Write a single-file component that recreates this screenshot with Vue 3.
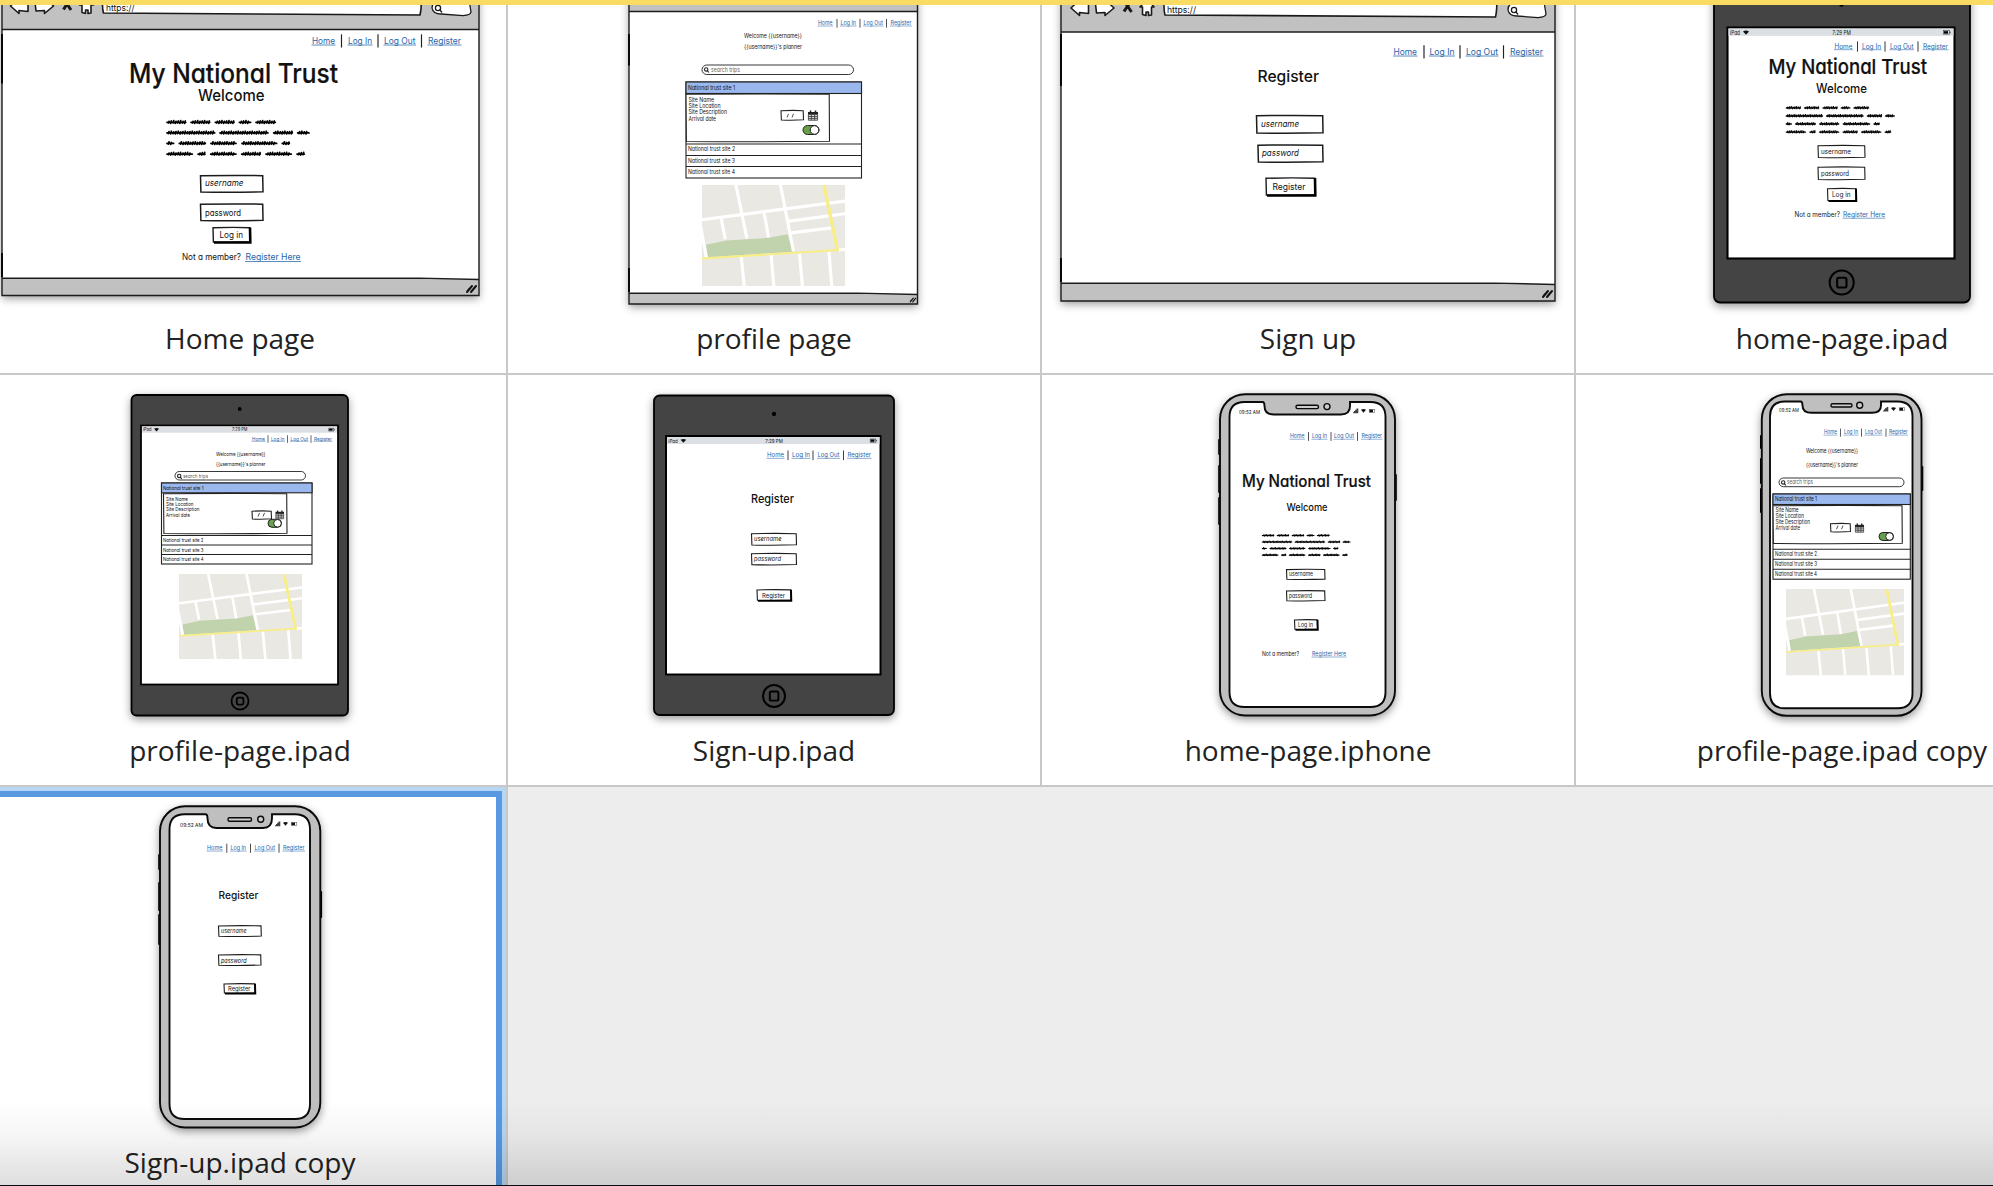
<script setup>
const BLUE = 'link'

/* Words of the scribbled paragraph, per line: [start, end] */
const scribbleWords = [
  [[0, 62], [72, 134], [145, 207], [217, 257], [267, 331]],
  [[0, 149], [159, 309], [320, 382], [392, 432]],
  [[0, 26], [37, 121], [132, 213], [225, 335], [346, 373]],
  [[0, 82], [93, 120], [131, 213], [224, 286], [297, 379], [390, 418]],
]
const scribblePath = scribbleWords
  .map((line, row) =>
    line
      .map(([a, b], w) => {
        const y = row * 31.7
        let d = `M${a + 3} ${y + 1}H${b - 3}`
        let i = 0
        for (let x = a + 9; x < b - 3; x += 7, i++) {
          const up = ((i * 7 + w * 3 + row) % 3) + 2
          d += `M${x} ${y - up}L${x - 2} ${y + 3 + (i % 2)}`
        }
        return d
      })
      .join(''),
  )
  .join('')

const roads =
  'M102 0L135 160M236 0L275 198M0 104L430 48M58 101L70 162M187 84L200 157M262 108L430 86M268 143L390 128M-4 125L13 216M410 194L430 192M118 215L127 302M208 210L216 302M293 205L302 302M382 200L390 302'

/* xs: edges of Home | sep | Log In | sep | Log Out | sep | Register */
function nav(xs, y, size) {
  const names = ['Home', 'Log In', 'Log Out', 'Register']
  const texts = names.map((n, i) => [xs[i * 3], y, xs[i * 3 + 1], size, n, BLUE])
  const seps = [2, 5, 8].map((i) => [xs[i], y - size * 1.02, y + size * 0.45, size * 0.13])
  return { texts, seps }
}

const screens = [
  {
    name: 'Home page', ox: -26, oy: -37, frame: 'browser',
    b: { x: 2, x2: 479, top: 29.5, foot: 279, y2: 295.5, url: [102.5, 421, 15], pill: [432, 471], k: 1, ix: 0, iy: 0, t: [106, 134.5, 11.3] },
    nav: nav([312, 335, 341.5, 348, 372, 378, 384, 415.5, 421.5, 428, 461], 43.5, 9),
    texts: [
      [129, 82.5, 338, 27, 'My National Trust', 'bold'],
      [198, 101, 264.5, 16.5, 'Welcome', 'semi'],
      [205, 186, 243.5, 9, 'username', 'ital'],
      [205, 215.5, 241, 9, 'password', ''],
      [219.5, 238, 243, 9, 'Log in', ''],
      [182, 260, 241, 9, 'Not a member?', ''],
      [245.5, 260, 300.5, 9, 'Register Here', BLUE],
    ],
    scribble: [166, 122, 0.3333],
    boxes: [[200.5, 175.5, 263, 192], [200.5, 204, 263, 220.5]],
    buttons: [[213, 227.5, 250, 242]],
  },
  {
    name: 'profile page', ox: 508, oy: -37, frame: 'browser',
    b: { x: 629, x2: 917.5, top: 11.5, foot: 294, y2: 304, k: 0.6 },
    nav: nav([818, 832.5, 837, 840.5, 856, 860, 863.5, 883, 886.5, 890.5, 911.5], 25, 6),
    texts: [
      [744, 37.5, 802, 6, 'Welcome {{username}}', ''],
      [744, 48.5, 802, 6, "{{username}}'s planner", ''],
    ],
    plan: {
      pill: [702, 65, 853.5, 74.5], search: [711, 71.8, 740], size: 6,
      acc: [686, 82, 861.5, 178], head: 93.5, inner: [686, 94, 829.5, 141.5], rows: [144, 155.5, 166.5],
      rowText: [688, 735, 89.5, 151.3, 163, 174], info: [688.5, [714, 720.5, 727, 716], [102, 107.7, 114.3, 120.7]],
      date: [781, 110.5, 803.5, 120], cal: [808, 110.5, 10], toggle: [803, 125.5, 16, 9], map: [702, 185, 143, 101],
    },
  },
  {
    name: 'Sign up', ox: 1042, oy: -37, frame: 'browser',
    b: { x: 1061, x2: 1555, top: 32, foot: 284, y2: 301, url: [1164, 1496.5, 17], pill: [1508, 1546], k: 1, ix: 1060.5, iy: 2, t: [1167, 1196, 13.3] },
    nav: nav([1393.5, 1417, 1424, 1429.5, 1454.5, 1460, 1466, 1498, 1503.5, 1510, 1543], 54.5, 9),
    texts: [
      [1257.5, 82, 1319, 16, 'Register', 'semi'],
      [1261, 126.5, 1299, 9, 'username', 'ital'],
      [1262, 156, 1299, 9, 'password', 'ital'],
      [1272.5, 190, 1305.5, 9, 'Register', ''],
    ],
    boxes: [[1256.5, 115.5, 1323, 133], [1258, 145, 1323, 162]],
    buttons: [[1266, 178, 1315, 195]],
  },
  {
    name: 'home-page.ipad', ox: 1576, oy: -37, frame: 'tablet',
    t: { x: 1714, y: -14, x2: 1970, y2: 302.5, s: [1727.5, 27.5, 1954.5, 258.5], cam: [1841.5, 4.5], home: [1841.7, 282.5, 12], k: 1 },
    nav: nav([1834.5, 1852.5, 1857.5, 1862, 1881, 1885, 1890, 1913.5, 1918, 1923, 1948], 48.5, 7),
    texts: [
      [1768.5, 73.5, 1927, 20.5, 'My National Trust', 'bold'],
      [1816, 93, 1867, 12.7, 'Welcome', 'semi'],
      [1821, 154, 1851, 7, 'username', ''],
      [1821, 175.5, 1849, 7, 'password', ''],
      [1832, 197, 1850.5, 7, 'Log in', ''],
      [1794.5, 217, 1840, 7, 'Not a member?', ''],
      [1843, 217, 1885, 7, 'Register Here', BLUE],
    ],
    scribble: [1785.5, 107.7, 0.2535],
    boxes: [[1818, 145.5, 1865, 157.5], [1818, 167, 1865, 179.5]],
    buttons: [[1827.5, 188.5, 1856, 200.5]],
  },
  {
    name: 'profile-page.ipad', ox: -26, oy: 375, frame: 'tablet',
    t: { x: 131.5, y: 395, x2: 348, y2: 715.5, s: [141, 425.5, 338, 684.5], cam: [239.7, 409], home: [240, 701, 8.5], k: 0.84 },
    nav: nav([252, 265, 268, 271, 284.5, 287.5, 290.5, 308, 311, 314, 332], 440.5, 5.2),
    texts: [
      [216, 455.5, 265.5, 5.2, 'Welcome {{username}}', ''],
      [216, 465.7, 265.5, 5.2, "{{username}}'s planner", ''],
    ],
    plan: {
      pill: [175, 471.5, 305.5, 480], search: [183, 477.5, 208], size: 5.2,
      acc: [161.5, 483, 312, 564], head: 492.8, inner: [163.5, 493.5, 287, 533.5], rows: [535.5, 545, 554.5],
      rowText: [163, 203.5, 489.5, 542.3, 551.5, 561.3], info: [166, [188, 193.5, 199.5, 190], [500.5, 506, 511, 516.7]],
      date: [252, 511, 271.5, 519], cal: [275.5, 510.5, 8.5], toggle: [268, 519.3, 13.5, 8], map: [179, 574, 123, 85],
    },
  },
  {
    name: 'Sign-up.ipad', ox: 508, oy: 375, frame: 'tablet',
    t: { x: 654, y: 395.5, x2: 894, y2: 715, s: [666, 436, 880.5, 674.5], cam: [774, 414], home: [774, 696, 11], k: 0.94 },
    nav: nav([767, 784, 788, 792, 810, 813, 817.5, 839.5, 843.5, 847.5, 871], 457.2, 6.6),
    texts: [
      [751, 503, 794, 12, 'Register', 'semi'],
      [754, 541.3, 781.5, 6.6, 'username', 'ital'],
      [754, 561.3, 781, 6.6, 'password', 'ital'],
      [762, 597.5, 785, 6.6, 'Register', ''],
    ],
    boxes: [[751.5, 533.5, 796.5, 545], [751.5, 553.5, 796.5, 564.7]],
    buttons: [[757, 589.7, 791, 600.3]],
  },
  {
    name: 'home-page.iphone', ox: 1042, oy: 375, frame: 'phone',
    p: { x: 1220, y: 394.2, x2: 1395, y2: 715.5, s: [1229.5, 402, 1385.5, 707], n: [1264.5, 1350, 414.5], sp: [1296, 1318.5, 405.2, 408.6], c: [1327, 406.6], time: [1239, 1260, 414], sig: [1353, 412.5], l: [[440, 454], [466, 492], [498, 524]], r: [475, 500] },
    nav: nav([1290, 1304.5, 1308.5, 1312, 1327, 1331, 1334, 1354, 1357.5, 1361.5, 1382], 438.2, 6),
    texts: [
      [1242, 486.5, 1371, 16.6, 'My National Trust', 'bold'],
      [1286.5, 511, 1327.5, 10.5, 'Welcome', 'semi'],
      [1289, 576.2, 1313, 6, 'username', ''],
      [1289, 597.8, 1312, 6, 'password', ''],
      [1298, 626.7, 1313, 6, 'Log in', ''],
      [1262, 656, 1299, 6, 'Not a member?', ''],
      [1312, 656, 1346, 6, 'Register Here', BLUE],
    ],
    scribble: [1261.7, 535.3, 0.206],
    boxes: [[1286.5, 569.3, 1325, 579.3], [1286.5, 590.7, 1325, 600.7]],
    buttons: [[1294.5, 619.7, 1317.5, 629.3]],
  },
  {
    name: 'profile-page.ipad copy', ox: 1576, oy: 375, frame: 'phone',
    p: { x: 1761.8, y: 394.2, x2: 1921.5, y2: 715.8, s: [1770, 401.5, 1912.5, 708.3], n: [1802.5, 1881, 412.8], sp: [1831, 1852, 403.7, 407], c: [1859.7, 405.2], time: [1779, 1799, 411.5], sig: [1883, 410.8], l: [[436, 448], [459, 483], [489, 512]], r: [467, 490] },
    nav: nav([1824, 1837, 1840.5, 1844, 1858, 1861.5, 1865, 1882, 1886, 1889, 1907.5], 434.2, 5.5),
    texts: [
      [1806, 453, 1858, 5.5, 'Welcome {{username}}', ''],
      [1806, 467, 1858, 5.5, "{{username}}'s planner", ''],
    ],
    plan: {
      pill: [1779, 478, 1904, 486.7], search: [1787, 484.3, 1813], size: 5.5,
      acc: [1773, 494, 1910.3, 579.2], head: 504.5, inner: [1773, 505.5, 1902.3, 543.5], rows: [549.3, 559.3, 569.3],
      rowText: [1775, 1817, 501, 556.3, 566.3, 576], info: [1775.5, [1798.5, 1804, 1810, 1800], [511.7, 517.5, 523.8, 529.8]],
      date: [1830.5, 523.5, 1850.5, 531.7], cal: [1855, 523.5, 9], toggle: [1879, 532.5, 14.5, 8], map: [1786, 589, 118, 86.5],
    },
  },
  {
    name: 'Sign-up.ipad copy', ox: -26, oy: 787, frame: 'phone', selected: true,
    p: { x: 160, y: 806.2, x2: 320.3, y2: 1127.5, s: [169.5, 814.3, 310, 1119], n: [207.5, 272, 828], sp: [228, 251.5, 817.7, 821.2], c: [260.7, 819.3], time: [180, 203, 826.5], sig: [275, 825.5], l: [[855, 869], [883, 910], [915, 944]], r: [892, 917] },
    nav: nav([207, 222.5, 226.8, 230.5, 246, 250.5, 254.5, 275, 279, 283, 304.5], 850, 6.2),
    texts: [
      [218.5, 899.3, 258.5, 11, 'Register', 'semi'],
      [221, 933, 246.5, 6.2, 'username', 'ital'],
      [221, 962.5, 246.5, 6.2, 'password', 'ital'],
      [228, 990.7, 250.5, 6.2, 'Register', ''],
    ],
    boxes: [[218.5, 925.7, 261.3, 936.2], [218.5, 954.7, 261, 965.2]],
    buttons: [[224, 983.7, 255, 993]],
  },
]

const siteInfo = ['Site Name', 'Site Location', 'Site Description', 'Arrival date']

function notchPath({ s: [x, y, x2, y2], n: [a, b, ny] }) {
  const r = 15
  return `M${x + r} ${y}H${a - 2}Q${a} ${y} ${a} ${y + 4}Q${a} ${ny} ${a + 9} ${ny}H${b - 9}Q${b} ${ny} ${b} ${y + 4}V${y}H${x2 - r}Q${x2} ${y} ${x2} ${y + r}V${y2 - r}Q${x2} ${y2} ${x2 - r} ${y2}H${x + r}Q${x} ${y2} ${x} ${y2 - r}V${y + r}Q${x} ${y} ${x + r} ${y}Z`
}

/* Slightly uneven hand-drawn rectangle */
function sketchRect([x, y, x2, y2]) {
  return `M${x} ${y + 0.3}Q${(x + x2) / 2} ${y - 0.4} ${x2 - 0.3} ${y + 0.2}L${x2} ${y2 - 0.2}Q${(x + x2) / 2} ${y2 + 0.6} ${x + 0.4} ${y2}Z`
}
</script>

<template>
  <main class="page">
    <div class="grid">
      <figure v-for="s in screens" :key="s.name" class="cell" :class="{ selected: s.selected }">
        <svg class="preview" width="532" height="355" :viewBox="`${s.ox} ${s.oy} 532 355`">
          <!-- browser window -->
          <g v-if="s.frame === 'browser'">
            <rect class="shadowed" :x="s.b.x" :y="-80" :width="s.b.x2 - s.b.x" :height="s.b.y2 + 80" fill="#c1c1c1" />
            <rect :x="s.b.x" :y="s.b.top" :width="s.b.x2 - s.b.x" :height="s.b.foot - s.b.top" fill="#fff" />
            <g fill="none" stroke="#1c1c1c" stroke-width="1.4">
              <path :d="`M${s.b.x} -80V${s.b.y2}H${s.b.x2}V-80`" />
              <path :d="`M${s.b.x} ${s.b.top}H${s.b.x2}`" />
              <path :d="`M${s.b.x} ${s.b.foot - 0.7}L${s.b.x2 - 60} ${s.b.foot - 0.9}L${s.b.x2} ${s.b.foot + 0.5}`" />
            </g>
            <path :d="`M${s.b.x} 34V${s.b.top + 54}M${s.b.x} ${s.b.foot - 26}V${s.b.foot - 2}`" stroke="#000" stroke-width="1.800" />
            <g :transform="`translate(${s.b.x2 - 13 * s.b.k} ${s.b.foot + 5 * s.b.k}) scale(${s.b.k})`" stroke="#111" stroke-width="2" stroke-linecap="round">
              <path d="M1 8L6 2M5 8L10 2M3 5L1.500 7" />
            </g>
            <template v-if="s.b.url">
              <g :transform="`translate(${s.b.ix} ${s.b.iy})`" fill="#fff" stroke="#1a1a1a" stroke-width="1.6" stroke-linejoin="round">
                <path d="M10.500 6L19 -2V2H28V11.500L19 10.500V13.500Z" />
                <path d="M35 2H45V-2L53.500 6L44.500 13.500V10.500L36 11Z" />
                <path d="M63 -2L71 10M71 -2L63.500 9.500" fill="none" stroke-width="3" />
                <path d="M79.500 5L87 -3L93.500 5H91V13L88 13.500V10H85.500V13.500L82 12.500V5Z" />
              </g>
              <path
                :d="`M${s.b.url[0] + 1} -8Q${s.b.url[0] - 1} ${s.b.url[2] - 8} ${s.b.url[0] + 1} ${s.b.url[2] - 2}L${s.b.url[1] - 1} ${s.b.url[2]}Q${s.b.url[1] + 1} ${s.b.url[2] - 8} ${s.b.url[1]} -8Z`"
                fill="#fff" stroke="#1a1a1a" stroke-width="1.6"
              />
              <text class="sketch" :x="s.b.t[0]" :y="s.b.t[2]" font-size="9" :textLength="s.b.t[1] - s.b.t[0]" lengthAdjust="spacingAndGlyphs">https://</text>
              <path
                :d="`M${s.b.pill[0] + 8} ${s.b.url[2] - 15}Q${s.b.pill[0]} ${s.b.url[2] - 14} ${s.b.pill[0]} ${s.b.url[2] - 7}Q${s.b.pill[0] + 1} ${s.b.url[2] - 1} ${s.b.pill[0] + 9} ${s.b.url[2] - 1}L${s.b.pill[1] - 8} ${s.b.url[2] + 0.6}Q${s.b.pill[1]} ${s.b.url[2]} ${s.b.pill[1]} ${s.b.url[2] - 3}L${s.b.pill[1] - 2} ${s.b.url[2] - 15}Z`"
                fill="#fff" stroke="#1a1a1a" stroke-width="1.3"
              />
              <g fill="none" stroke="#1a1a1a" stroke-width="1.3">
                <circle :cx="s.b.pill[0] + 6" :cy="s.b.url[2] - 7" r="2.600" />
                <path :d="`M${s.b.pill[0] + 7.5} ${s.b.url[2] - 5.5}l2.500 3`" />
              </g>
            </template>
          </g>

          <!-- tablet -->
          <g v-else-if="s.frame === 'tablet'">
            <rect class="shadowed" :x="s.t.x" :y="s.t.y" :width="s.t.x2 - s.t.x" :height="s.t.y2 - s.t.y" :rx="6 * s.t.k" fill="#444" stroke="#000" stroke-width="1.8" />
            <rect :x="s.t.s[0]" :y="s.t.s[1]" :width="s.t.s[2] - s.t.s[0]" :height="s.t.s[3] - s.t.s[1]" fill="#fff" stroke="#000" :stroke-width="2.1 * s.t.k" />
            <rect :x="s.t.s[0] + 1" :y="s.t.s[1] + 1" :width="s.t.s[2] - s.t.s[0] - 2" :height="7.4 * s.t.k" fill="#dce0e4" />
            <circle :cx="s.t.cam[0]" :cy="s.t.cam[1]" :r="2.3 * s.t.k" fill="#000" />
            <g fill="none" stroke="#000" :stroke-width="2.1 * s.t.k">
              <circle :cx="s.t.home[0]" :cy="s.t.home[1]" :r="s.t.home[2]" />
              <rect :x="s.t.home[0] - s.t.home[2] * 0.38" :y="s.t.home[1] - s.t.home[2] * 0.4" :width="s.t.home[2] * 0.78" :height="s.t.home[2] * 0.82" :rx="s.t.home[2] * 0.15" />
            </g>
            <text class="sketch" :x="s.t.s[0] + 2.5 * s.t.k" :y="s.t.s[1] + 7 * s.t.k" :font-size="5.6 * s.t.k" :textLength="10 * s.t.k" lengthAdjust="spacingAndGlyphs">iPad</text>
            <text class="sketch" :x="s.t.cam[0] - 9.3 * s.t.k" :y="s.t.s[1] + 7 * s.t.k" :font-size="5.6 * s.t.k" :textLength="18.6 * s.t.k" lengthAdjust="spacingAndGlyphs">7:29 PM</text>
            <g :transform="`translate(${s.t.s[0] + 15.5 * s.t.k} ${s.t.s[1] + 3 * s.t.k}) scale(${s.t.k})`">
              <path d="M0 1Q3 -0.800 6 1L3 4.200Z" fill="#111" />
            </g>
            <g :transform="`translate(${s.t.s[2] - 11 * s.t.k} ${s.t.s[1] + 3.2 * s.t.k}) scale(${s.t.k})`">
              <rect x="0" y="0" width="6" height="3.400" fill="none" stroke="#333" stroke-width=".6" />
              <rect x=".5" y=".5" width="4" height="2.400" fill="#000" />
              <rect x="6.300" y="1" width=".8" height="1.500" fill="#333" />
            </g>
          </g>

          <!-- phone -->
          <g v-else>
            <g stroke="#000" stroke-width="2" stroke-linecap="round">
              <path v-for="(k, i) in s.p.l" :key="i" :d="`M${s.p.x - 0.8} ${k[0]}V${k[1]}`" />
              <path :d="`M${s.p.x2 + 0.8} ${s.p.r[0]}V${s.p.r[1]}`" />
            </g>
            <rect class="shadowed" :x="s.p.x" :y="s.p.y" :width="s.p.x2 - s.p.x" :height="s.p.y2 - s.p.y" rx="25" fill="#bfbfbf" stroke="#0a0a0a" stroke-width="1.900" />
            <path :d="notchPath(s.p)" fill="#fff" stroke="#0a0a0a" stroke-width="1.900" />
            <rect :x="s.p.sp[0]" :y="s.p.sp[2]" :width="s.p.sp[1] - s.p.sp[0]" :height="s.p.sp[3] - s.p.sp[2]" rx="1.500" fill="#ccc" stroke="#0a0a0a" stroke-width="1.400" />
            <circle :cx="s.p.c[0]" :cy="s.p.c[1]" r="3" fill="#ccc" stroke="#0a0a0a" stroke-width="1.400" />
            <text class="sketch" :x="s.p.time[0]" :y="s.p.time[2]" font-size="5.200" :textLength="s.p.time[1] - s.p.time[0]" lengthAdjust="spacingAndGlyphs">09:52 AM</text>
            <g :transform="`translate(${s.p.sig[0]} ${s.p.sig[1]})`" fill="#111">
              <path d="M0 .8V-.3H1V-1.500H2.200V-2.700H3.500V-3.900H5.300V.8Z" opacity=".8" />
              <path d="M8 -2.700Q10.500 -4.500 13 -2.700L10.500 .3Z" />
              <rect x="16.200" y="-3" width="5.600" height="2.800" fill="none" stroke="#444" stroke-width=".5" />
              <rect x="16.500" y="-2.900" width="3.500" height="2.600" />
            </g>
          </g>

          <!-- navigation separators -->
          <path v-for="(p, i) in s.nav.seps" :key="'s' + i" :d="`M${p[0]} ${p[1]}V${p[2]}`" stroke="#222" :stroke-width="p[3]" />

          <!-- form controls -->
          <path v-if="s.scribble" :d="scribblePath" :transform="`translate(${s.scribble[0]} ${s.scribble[1]}) scale(${s.scribble[2]})`" class="scribble" />
          <path v-for="(b, i) in s.boxes" :key="'b' + i" :d="sketchRect(b)" fill="#fff" stroke="#1c1c1c" :stroke-width="s.frame === 'browser' ? 1.5 : 1.1" />
          <g v-for="(b, i) in s.buttons" :key="'u' + i">
            <path :d="sketchRect(b)" fill="#fff" stroke="#1c1c1c" :stroke-width="s.frame === 'browser' ? 1.4 : 1.1" />
            <path :d="`M${b[2]} ${b[1]}L${b[2] + 0.3} ${b[3] + 0.5}H${b[0] + 1}`" fill="none" stroke="#000" :stroke-width="s.frame === 'browser' ? 2.6 : 1.9" />
          </g>

          <!-- planner -->
          <g v-if="s.plan">
            <g fill="#fff" stroke="#222" stroke-width="1.100">
              <rect :x="s.plan.pill[0]" :y="s.plan.pill[1]" :width="s.plan.pill[2] - s.plan.pill[0]" :height="s.plan.pill[3] - s.plan.pill[1]" :rx="(s.plan.pill[3] - s.plan.pill[1]) / 2" stroke-width=".9" />
              <circle :cx="s.plan.pill[0] + 4.2" :cy="s.plan.pill[1] + 4.4" r="1.700" />
              <path :d="`M${s.plan.pill[0] + 5.3} ${s.plan.pill[1] + 5.6}l1.600 1.900`" />
              <rect :x="s.plan.acc[0]" :y="s.plan.acc[1]" :width="s.plan.acc[2] - s.plan.acc[0]" :height="s.plan.acc[3] - s.plan.acc[1]" />
              <rect :x="s.plan.acc[0]" :y="s.plan.acc[1]" :width="s.plan.acc[2] - s.plan.acc[0]" :height="s.plan.head - s.plan.acc[1]" fill="#9ab8ee" />
              <path :d="sketchRect(s.plan.inner)" />
              <path v-for="y in s.plan.rows" :key="y" :d="`M${s.plan.acc[0]} ${y}H${s.plan.acc[2]}`" />
              <path :d="sketchRect(s.plan.date)" />
              <path
                :d="`M${s.plan.date[0] + 6} ${s.plan.date[3] - 2.5}l1.500 -3.600m3.500 3.600l1.500 -3.600`" stroke-width=".8" fill="none"
              />
            </g>
            <text class="sketch" fill-opacity=".75" :x="s.plan.search[0]" :y="s.plan.search[1]" :font-size="s.plan.size" :textLength="s.plan.search[2] - s.plan.search[0]" lengthAdjust="spacingAndGlyphs">search trips</text>
            <text
              v-for="n in 4" :key="'r' + n" class="sketch" :x="s.plan.rowText[0]" :y="s.plan.rowText[n + 1]" :font-size="s.plan.size"
              :textLength="s.plan.rowText[1] - s.plan.rowText[0]" lengthAdjust="spacingAndGlyphs"
            >National trust site {{ n }}</text>
            <text
              v-for="(t, i) in siteInfo" :key="t" class="sketch" :x="s.plan.info[0]" :y="s.plan.info[2][i]" :font-size="s.plan.size"
              :textLength="s.plan.info[1][i] - s.plan.info[0]" lengthAdjust="spacingAndGlyphs"
            >{{ t }}</text>
            <g :transform="`translate(${s.plan.cal[0]} ${s.plan.cal[1]}) scale(${s.plan.cal[2] / 10})`">
              <path d="M0 1.500H10V4H0Z" fill="#222" />
              <path d="M.4 4H9.600V9.700H.4ZM3.400 4V9.700M6.600 4V9.700M.4 6H9.600M.4 7.900H9.600" fill="#ddd" stroke="#333" stroke-width=".8" />
              <path d="M2.500 0V2M7.500 0V2" stroke="#222" stroke-width="1.500" />
            </g>
            <rect :x="s.plan.toggle[0]" :y="s.plan.toggle[1]" :width="s.plan.toggle[2]" :height="s.plan.toggle[3]" :rx="s.plan.toggle[3] / 2" fill="#68a04c" stroke="#222" />
            <circle :cx="s.plan.toggle[0] + s.plan.toggle[2] - s.plan.toggle[3] / 2" :cy="s.plan.toggle[1] + s.plan.toggle[3] / 2" :r="s.plan.toggle[3] / 2 - 0.2" fill="#fff" stroke="#222" />
            <svg :x="s.plan.map[0]" :y="s.plan.map[1]" :width="s.plan.map[2]" :height="s.plan.map[3]" viewBox="0 0 430 302" preserveAspectRatio="none">
              <rect width="430" height="302" fill="#eae8e2" />
              <path d="M12 179L73 166L200 158L258 147L272 200L17 216Z" fill="#c0d3ad" />
              <path :d="roads" fill="none" stroke="#fff" stroke-width="9.500" />
              <path d="M0 220L410 194" fill="none" stroke="#f8ee86" stroke-width="6" />
              <path d="M366 -4L408 198" fill="none" stroke="#f8ee86" stroke-width="10" />
            </svg>
          </g>

          <!-- labels -->
          <g v-for="(t, i) in [...s.nav.texts, ...s.texts]" :key="'t' + i">
            <text class="sketch" :class="t[5]" :x="t[0]" :y="t[1]" :font-size="t[3]" :textLength="t[2] - t[0]" lengthAdjust="spacingAndGlyphs">{{ t[4] }}</text>
            <path v-if="t[5] === 'link'" :d="`M${t[0] - 0.5} ${t[1] + t[3] * 0.17}H${t[2] + 0.5}`" stroke="#4a7fb8" :stroke-width="t[3] * 0.1" />
          </g>
        </svg>
        <figcaption class="caption">{{ s.name }}</figcaption>
      </figure>
    </div>
    <div class="topline"></div>
    <div class="fade"></div>
  </main>
</template>

<style>
body {
  margin: 0;
  overflow: hidden;
}
</style>

<style scoped>
.page {
  position: relative;
  width: 1993px;
  height: 1186px;
  overflow: hidden;
  background: #ededed;
}
.grid {
  display: grid;
  grid-template-columns: repeat(4, 534px);
  grid-auto-rows: 412px;
  margin: -37px 0 0 -26px;
  width: 2136px;
}
.cell {
  box-sizing: border-box;
  display: flex;
  flex-direction: column;
  margin: 0;
  overflow: hidden;
  background: #fff;
  border-right: 2px solid #c8c8c8;
  border-bottom: 2px solid #c8c8c8;
}
.cell.selected {
  box-shadow: inset 0 0 0 4px #b5d6f4, inset 0 0 0 10px #5899e2;
}
.preview {
  display: block;
  flex: none;
}
.caption {
  color: #222;
  font: 28px/40px 'Open Sans', 'Noto Sans', sans-serif;
  text-align: center;
  white-space: nowrap;
}
.shadowed {
  filter: drop-shadow(0 3px 4px rgba(0, 0, 0, 0.4));
}
.sketch {
  font-family: Inter, 'Open Sans', sans-serif;
  font-weight: 400;
  font-feature-settings: 'cv11';
  font-variant-ligatures: none;
  fill: #111;
}
.sketch.bold {
  font-weight: 500;
  stroke: #111;
  stroke-width: 0.2px;
}
.sketch.semi {
  font-weight: 500;
}
.sketch.ital {
  font-style: italic;
}
.sketch.link {
  fill: #2563a8;
}
.scribble {
  fill: none;
  stroke: #000;
  stroke-width: 5.2;
  stroke-linecap: round;
}
.topline {
  position: absolute;
  inset: 0 0 auto 0;
  height: 5px;
  background: #fadc64;
}
.fade {
  position: absolute;
  inset: auto 0 0 0;
  height: 86px;
  border-bottom: 1px solid #0b0b14;
  background: linear-gradient(to bottom, rgba(0, 0, 0, 0), rgba(0, 0, 0, 0.03) 40%, rgba(0, 0, 0, 0.13));
}
</style>
